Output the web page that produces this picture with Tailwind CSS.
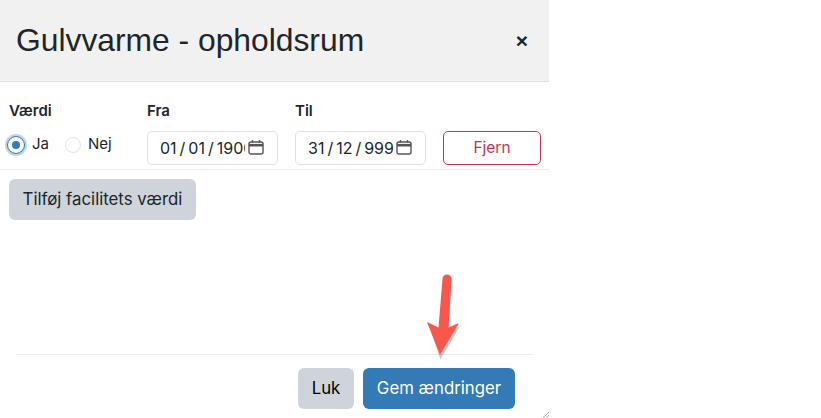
<!DOCTYPE html>
<html lang="en">
<head>
    <meta charset="UTF-8">
    <title>Gulvvarme - opholdsrum</title>
    <script src="https://cdn.jsdelivr.net/npm/@tailwindcss/browser@4"></script>
</head>
<body class="bg-white h-[418px] overflow-hidden font-['Inter','Liberation_Sans',sans-serif] text-[#212529]">
    <div class="relative w-[549px] h-[418px] flex flex-col">
        <!-- header -->
        <div class="h-[82px] shrink-0 bg-[#f1f1f1] border-b border-[#dee2e6] pl-4 pr-[21px] flex items-center justify-between">
            <h1 class="text-[31.8px] leading-none font-['Liberation_Sans',sans-serif] font-normal">Gulvvarme - opholdsrum</h1>
            <span class="text-[21px] leading-none font-semibold font-['Liberation_Sans',sans-serif]">×</span>
        </div>

        <!-- value row -->
        <div class="h-[88px] shrink-0 border-b border-[#e9ecef] pl-[9px] pt-[20px] flex text-[15px]">
            <div class="w-[138px]">
                <div class="font-semibold leading-[18px]">Værdi</div>
                <div class="flex items-center mt-[16px] h-[17px]">
                    <span class="w-4 h-4 rounded-full bg-[#337ab7] border-[4px] border-white ring-[3px] ring-[#337ab7]/30 outline outline-[#337ab7] -ml-[1px]"></span>
                    <span class="ml-2">Ja</span>
                    <span class="w-4 h-4 rounded-full border border-[#dee2e6] ml-4"></span>
                    <span class="ml-[7px]">Nej</span>
                </div>
            </div>
            <div class="w-[148px]">
                <div class="font-semibold leading-[18px]">Fra</div>
                <div class="mt-[11px] w-[131px] h-[34px] border border-[#dee2e6] rounded-[5px] flex items-center pl-3 pr-[13px]">
                    <span class="w-[85px] overflow-hidden whitespace-nowrap text-[16px] [word-spacing:-1.5px]">01 / 01 / 1900</span>
                    <svg class="ml-auto -mt-0.5" width="16" height="16" viewBox="0 0 16 16" fill="none" stroke="#555" stroke-width="1.4"><rect x="1" y="3" width="14" height="12" rx="2"/><path d="M1 6.2h14" stroke-width="2.6"/><path d="M4.5 1v2.5M11.5 1v2.5"/></svg>
                </div>
            </div>
            <div class="w-[148px]">
                <div class="font-semibold leading-[18px]">Til</div>
                <div class="mt-[11px] w-[131px] h-[34px] border border-[#dee2e6] rounded-[5px] flex items-center pl-3 pr-[13px]">
                    <span class="w-[85px] overflow-hidden whitespace-nowrap text-[16px] [word-spacing:-1.5px]">31 / 12 / 9999</span>
                    <svg class="ml-auto -mt-0.5" width="16" height="16" viewBox="0 0 16 16" fill="none" stroke="#555" stroke-width="1.4"><rect x="1" y="3" width="14" height="12" rx="2"/><path d="M1 6.2h14" stroke-width="2.6"/><path d="M4.5 1v2.5M11.5 1v2.5"/></svg>
                </div>
            </div>
            <button class="mt-[29px] w-[98px] h-[34px] border border-[#c8324a] rounded-[5px] text-[#c8324a] text-[15.5px]">Fjern</button>
        </div>

        <!-- add button -->
        <div class="pl-[9px] pt-[9px]">
            <button class="h-[41px] w-[187px] bg-[#ced4da] rounded-[6px] text-[16.8px] text-[#212529] whitespace-nowrap">Tilføj facilitets værdi</button>
        </div>

        <!-- footer -->
        <div class="mt-auto mx-4 h-[64px] border-t border-[#e9ecef] flex items-start justify-end gap-[9px] pt-[13px] pr-[18px]">
            <button class="h-[41px] w-[56px] bg-[#ced4da] rounded-[6px] text-[16.8px] text-black">Luk</button>
            <button class="h-[41px] w-[152px] bg-[#337ab7] rounded-[6px] text-[16.8px] text-white whitespace-nowrap">Gem ændringer</button>
        </div>

        <!-- annotation arrow -->
        <svg class="absolute left-[420px] top-[268px]" width="50" height="92" viewBox="0 0 50 92">
            <path d="M20.5 90 L9 56 L19 60 L23 12 A4.2 4.2 0 0 1 31.5 12 L29 60 L39.5 57 Z" fill="#8a8a8a" opacity=".45" transform="translate(0 1.5)"/>
            <path d="M20 87 L7 54 L18.5 59.5 L22.5 11 A4.5 4.5 0 0 1 31.5 11 L28.5 59.5 L39 55 Z" fill="#f9574b"/>
        </svg>

        <!-- resize handle -->
        <svg class="absolute right-0 bottom-0" width="6" height="6" viewBox="0 0 6 6"><path d="M0 6L6 0M3 6L6 3" stroke="#aaa" stroke-width="1"/></svg>
    </div>
</body>
</html>
